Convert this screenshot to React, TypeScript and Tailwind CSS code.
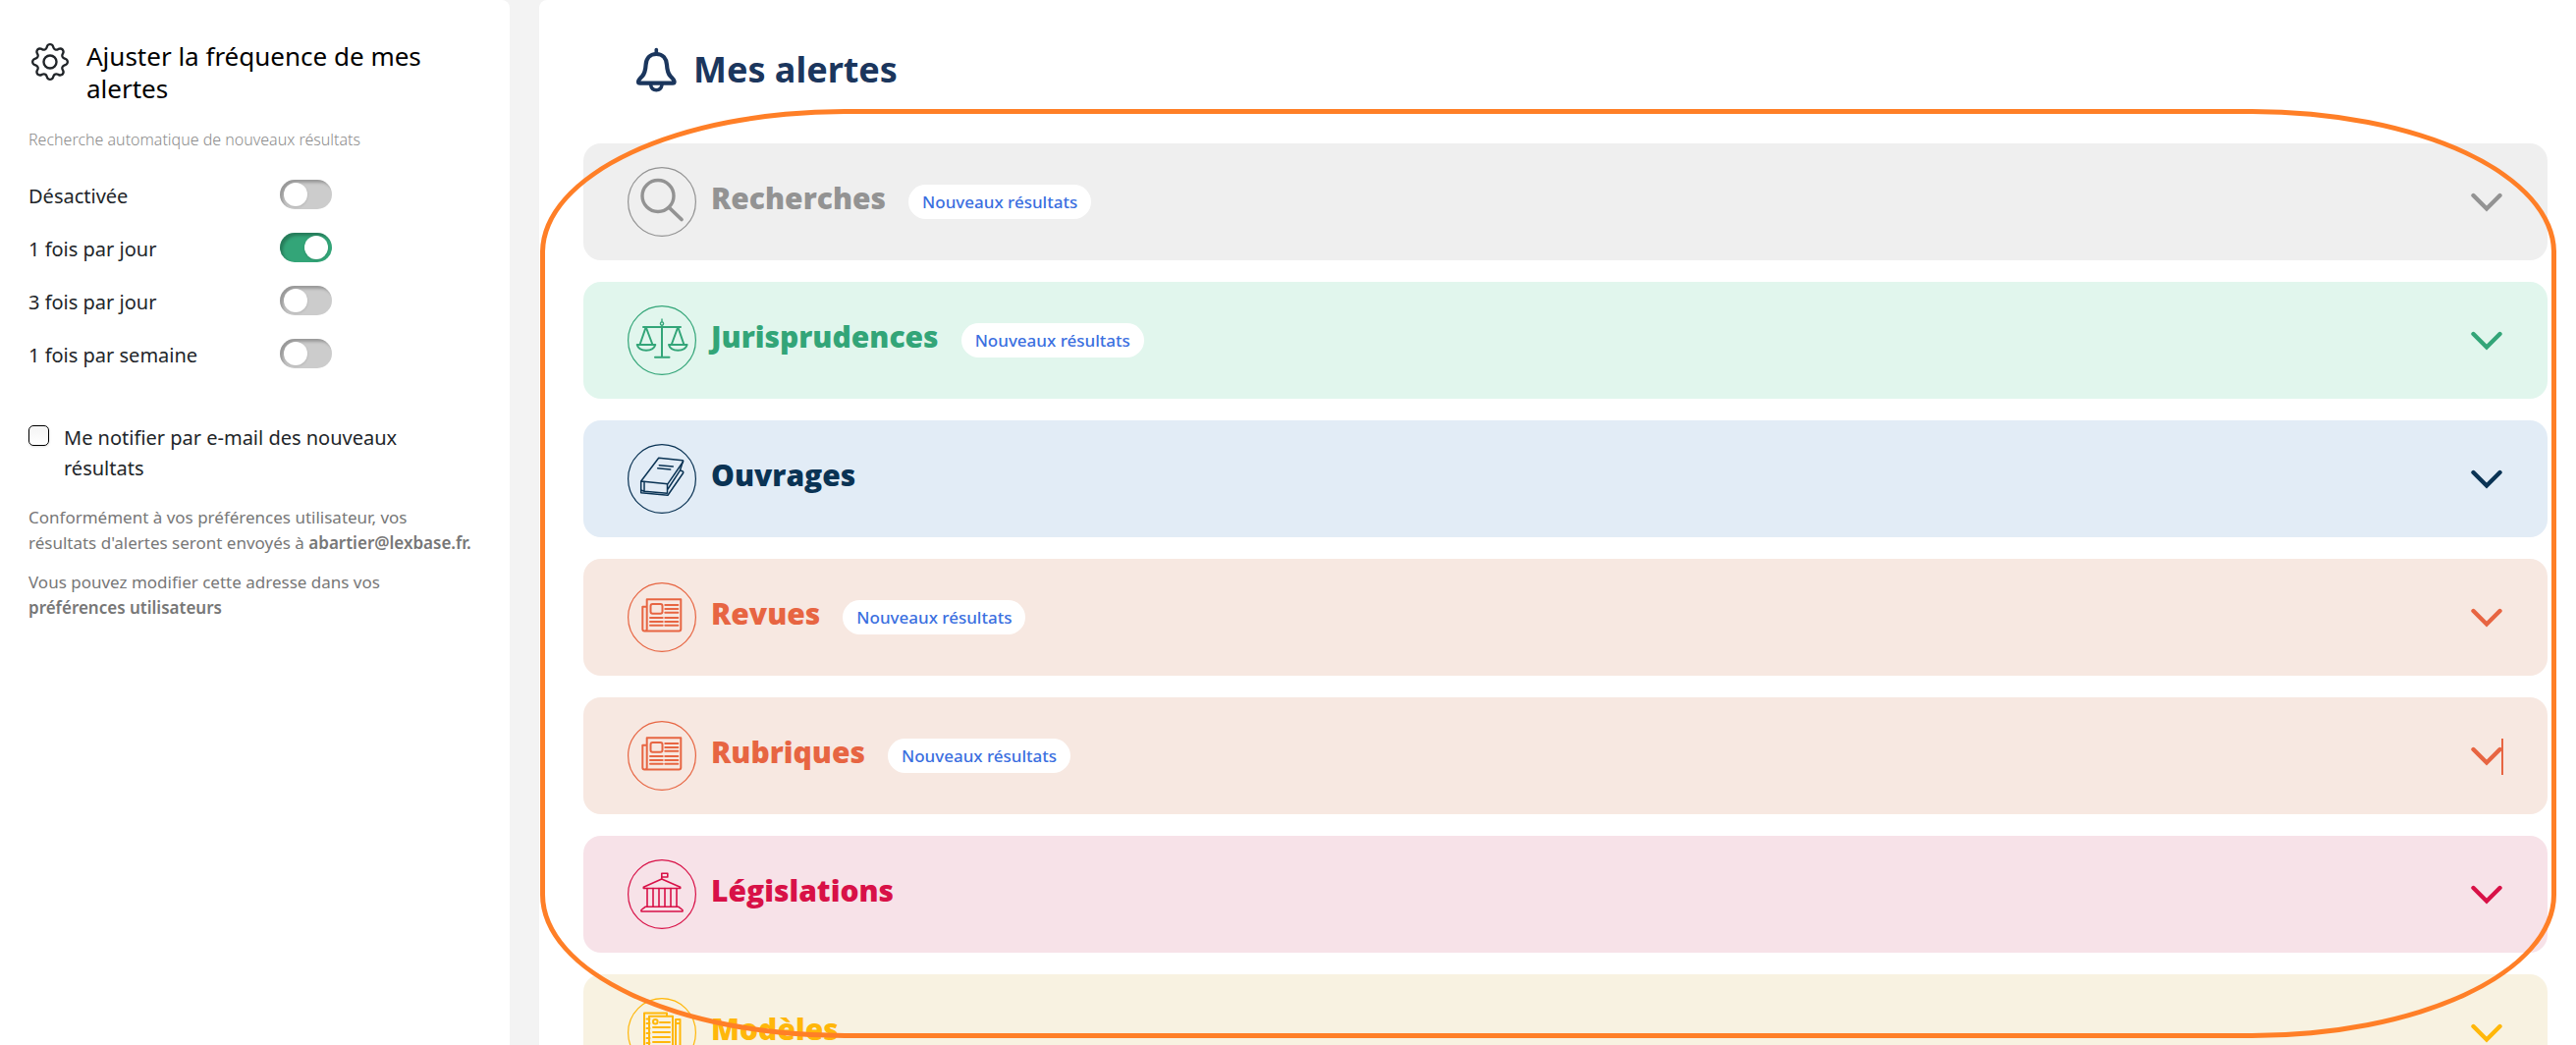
import { useState } from 'react';
import type { ReactNode } from 'react';
import { BsGear } from 'react-icons/bs';

const frequencies = [
  { id: 'off', label: 'Désactivée' },
  { id: 'daily', label: '1 fois par jour' },
  { id: 'three-daily', label: '3 fois par jour' },
  { id: 'weekly', label: '1 fois par semaine' },
];

const searchIcon = (
  <g strokeWidth="3.4">
    <circle cx="31" cy="29.5" r="16" />
    <path d="M42.5 41.5 55 53.5" strokeWidth="3.8" />
  </g>
);

const scalesIcon = (
  <g strokeWidth="2">
    <path d="M16 22h38M35 21v31.5M28 52.7h14.5" />
    <path d="M35 14v2.5" strokeWidth="1.4" />
    <circle cx="35" cy="18.5" r="1.6" strokeWidth="1.4" />
    <path d="M18.7 22 12.5 40M18.7 22 25.5 40M9.7 40h18.6c-1 3.6-4.8 5.7-9.3 5.7S10.7 43.6 9.7 40Z" />
    <path d="M51.3 22 44.7 40M51.3 22 57.5 40M42 40h18.6c-1 3.6-4.8 5.7-9.3 5.7S43 43.6 42 40Z" />
  </g>
);

const bookIcon = (
  <g strokeWidth="1.5">
    <path d="M31.7 14.3 56 16.8q1 .2.6 1.2L41 40.700 13.700 38ZM13.700 38v11.700L41 52.300 56.700 29.500q.4-1.200-.9-1.700L53.700 27" />
    <path d="M17 38.500v9.800L40.300 50.200M40.500 41v9M14.300 47.300 17 48.300M56.300 18 53.500 26.800 41 46" />
    <path d="M32.300 21.700 46.300 23M30.700 24.700 43.700 26" />
  </g>
);

const newsIcon = (
  <g strokeWidth="2">
    <path d="M19.7 17.3h34.6v30.2a2 2 0 0 1-2 2H17.300a2 2 0 0 1-2-2V24.700h4.400M19.700 17.300v30.200a2 2 0 0 1-2 2" />
    <rect x="23.5" y="22" width="12" height="9.700" rx="2" />
    <path d="M38.300 23h13M38.300 27h13M38.300 30.800h13M23 36h12.700M38.300 36h13M23 40h12.700M38.300 40h13M23 43.800h12.700M38.300 43.800h13" />
  </g>
);

const courtIcon = (
  <g strokeWidth="1.6">
    <path d="M34.8 20v-5.7h6v3.700h-6M34.800 20 16.300 28.300v1.200h37.400v-1.200Z" />
    <path d="M20 29.500V48M26 29.500V48M32 29.500V48M38 29.500V48M44 29.500V48M50 29.500V48" />
    <path d="M18 48.300h34L56 51.500v1.500H14v-1.500Z" />
  </g>
);

const documentIcon = (
  <g strokeWidth="2">
    <path d="M40 18.5v-3H17v40h5M22 18.700h24v37H22Z" />
    <path d="M19.500 21.500h3M19.500 26h3M19.500 31h3M19.500 36h3M19.500 41h3M19.500 46h3" />
    <circle cx="28.300" cy="24.300" r="2.300" />
    <path d="M33 25h10M26 30h17M26 35h17M26 40h17M26 45h17M26 50h17" />
    <path d="M49 22h4.500v27l-2.200 4-2.300-4ZM49 26h4.500" />
  </g>
);

type Section = { title: string; icon: ReactNode; isNew?: boolean; caret?: boolean; color: string };

const sections: Section[] = [
  { title: 'Recherches', icon: searchIcon, isNew: true, color: 'bg-[#efefef] text-[#939393]' },
  { title: 'Jurisprudences', icon: scalesIcon, isNew: true, color: 'bg-[#e1f6ed] text-[#33a578]' },
  { title: 'Ouvrages', icon: bookIcon, color: 'bg-[#e2ecf6] text-[#0a3354]' },
  { title: 'Revues', icon: newsIcon, isNew: true, color: 'bg-[#f7e8e1] text-[#e76542]' },
  { title: 'Rubriques', icon: newsIcon, isNew: true, caret: true, color: 'bg-[#f7e8e1] text-[#e76542]' },
  { title: 'Législations', icon: courtIcon, color: 'bg-[#f7e2e8] text-[#d81147]' },
  { title: 'Modèles', icon: documentIcon, color: 'bg-[#f8f2e1] text-[#ffb70a]' },
];

function BellIcon() {
  return (
    <svg viewBox="0 0 44 46" className="h-[46px] w-11" fill="none" stroke="currentColor" strokeWidth="4.2" strokeLinecap="round" strokeLinejoin="round" aria-hidden="true">
      <path d="M22.300 2.500V6" strokeWidth="3.6" />
      <path d="M22.300 7C15.500 7 12 12 11.600 18c-.3 5-.8 8.500-3.600 11.500C5.500 32 4 33 4 35.200c0 1 .6 1.500 1.700 1.500h33.200c1.100 0 1.700-.5 1.700-1.500 0-2.200-1.500-3.200-4-5.700-2.800-3-3.300-6.500-3.600-11.500C32.600 12 29.100 7 22.300 7Z" />
      <path d="M16.600 38.500c.6 3.300 2.800 5.200 5.700 5.200s5.100-1.900 5.700-5.200" strokeWidth="3.6" />
    </svg>
  );
}

function AlertSection({ section }: { section: Section }) {
  return (
    <button type="button" aria-expanded={false} className={`flex h-[119px] w-full items-center rounded-[18px] pr-[46px] pl-[45px] text-left ${section.color}`}>
      <svg viewBox="0 0 70 71" className="h-[71px] w-[70px] shrink-0" fill="none" stroke="currentColor" strokeLinecap="round" strokeLinejoin="round" aria-hidden="true">
        <ellipse cx="35" cy="35.5" rx="34.4" ry="34.9" strokeWidth="1.2" />
        {section.icon}
      </svg>
      <span className="ml-[15px] pb-[7px] font-['Open_Sans',sans-serif] text-3xl font-extrabold">{section.title}</span>
      {section.isNew && (
        <span className="ml-[23px] flex h-[35px] items-center rounded-full bg-white px-[14px] text-[17px] font-medium whitespace-nowrap text-[#3b6fe0]">
          Nouveaux résultats
        </span>
      )}
      <span className="relative ml-auto">
        <svg viewBox="0 0 32 20" className="h-5 w-8" fill="none" stroke="currentColor" strokeWidth="4.4" strokeLinecap="round" aria-hidden="true">
          <path d="M2.500 3 16 16.500 29.500 3" />
        </svg>
        {section.caret && <span className="absolute -top-2 left-[31px] h-[37px] w-0.5 bg-current" />}
      </span>
    </button>
  );
}

export default function App() {
  const [frequency, setFrequency] = useState('daily');
  const [notify, setNotify] = useState(false);

  return (
    <div className="flex h-screen gap-[30px] overflow-hidden bg-[#f3f3f3] font-['Noto_Sans','Open_Sans',sans-serif]">
      <aside className="w-[519px] shrink-0 rounded-tr-lg bg-white pt-[41px] pr-8 pl-[29px] text-[#212529]">
        <div className="flex">
          <BsGear className="mt-[3px] ml-[3px] size-[38px] shrink-0" />
          <h2 className="ml-[18px] text-[26px] leading-[33px] text-black">Ajuster la fréquence de mes alertes</h2>
        </div>
        <p className="mt-[23px] text-base leading-6 font-light text-[#8c8c8c]">Recherche automatique de nouveaux résultats</p>

        {/* Frequency switches */}
        <div className="mt-[17px]">
          {frequencies.map(f => (
            <label key={f.id} htmlFor={f.id} className="flex h-[54px] items-center text-xl">
              <span className="w-64 pt-[3px]">{f.label}</span>
              <input
                id={f.id}
                type="radio"
                name="frequency"
                checked={frequency === f.id}
                onChange={() => setFrequency(f.id)}
                className="h-[30px] w-[53px] appearance-none rounded-full bg-[#cccccc] p-[3px] pl-1 shadow-[inset_3px_3px_3px_rgba(0,0,0,0.25)] before:block before:size-6 before:rounded-full before:bg-white before:shadow-sm checked:bg-[#33a578] checked:pl-[25px]"
              />
            </label>
          ))}
        </div>

        <div className="mt-[43px] flex">
          <input
            id="notify"
            type="checkbox"
            checked={notify}
            onChange={e => setNotify(e.target.checked)}
            className="mt-[3px] size-[21px] shrink-0 appearance-none rounded-[5px] border border-black bg-linear-to-b from-[#f4f4f4] to-white shadow-sm checked:bg-[#33a578]"
          />
          <label htmlFor="notify" className="ml-[15px] text-xl leading-[31px]">
            Me notifier par e-mail des nouveaux<br />résultats
          </label>
        </div>

        <p className="mt-[22px] text-[17px] leading-[26px] whitespace-nowrap text-[#777777]">
          Conformément à vos préférences utilisateur, vos<br />
          résultats d'alertes seront envoyés à <strong className="font-semibold">abartier@lexbase.fr.</strong>
        </p>
        <p className="mt-[14px] text-[17px] leading-[26px] text-[#777777]">
          Vous pouvez modifier cette adresse dans vos<br />
          <a href="#preferences" className="font-semibold">préférences utilisateurs</a>
        </p>
      </aside>

      <main className="relative min-w-0 flex-1 rounded-tl-lg bg-white pt-[47px] pr-[29px] pl-[45px]">
        <header className="mb-[51px] flex h-12 items-center pl-[52px] text-[#1b365d]">
          <BellIcon />
          <h1 className="ml-4 text-4xl leading-[48px] font-bold">Mes alertes</h1>
        </header>
        <div className="flex flex-col gap-[22px]">
          {sections.map(section => (
            <AlertSection key={section.title} section={section} />
          ))}
        </div>
        {/* Highlight drawn around the list */}
        <div className="pointer-events-none absolute top-[111px] right-5 bottom-[7px] left-px rounded-[310px/146px] border-5 border-[#ff7f27]" />
      </main>
    </div>
  );
}
